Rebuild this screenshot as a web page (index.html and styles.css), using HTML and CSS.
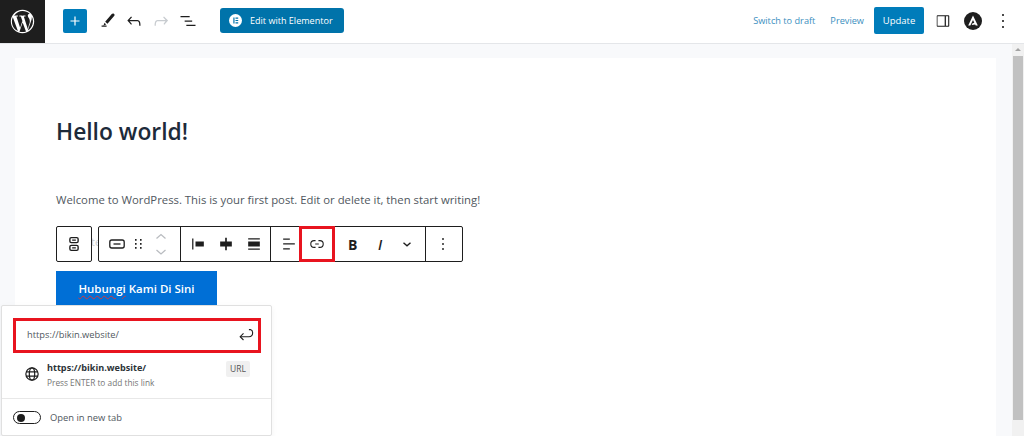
FILE: index.html
```html
<!DOCTYPE html>
<html lang="en">
<head>
    <meta charset="UTF-8">
    <meta name="viewport" content="width=device-width, initial-scale=1.0">
    <title>Edit Post</title>
    <link rel="stylesheet" href="styles.css">
</head>
<body>
    <header class="topbar">
        <a class="wp-logo">
            <svg width="27" height="27" viewBox="0 0 24 24" fill="#fff"><path d="M12 1.6C6.3 1.6 1.6 6.3 1.6 12S6.3 22.4 12 22.4 22.4 17.7 22.4 12 17.7 1.6 12 1.6zM2.6 12c0-1.4.3-2.6.8-3.8l4.5 12.3C4.700 19 2.600 15.700 2.600 12zM12 21.400c-.9 0-1.800-.1-2.700-.4l2.800-8.200 2.900 7.900c0 0 0 .1.100.1-.9.400-2 .6-3.100.6zM13.300 7.600c.6 0 1.100-.1 1.100-.1.500-.1.500-.8 0-.8 0 0-1.500.1-2.500.1-.9 0-2.400-.1-2.400-.1-.5 0-.6.800 0 .8 0 0 .5.100 1 .1l1.400 3.900-2 6-3.300-9.900c.6 0 1.100-.1 1.100-.1.500-.1.500-.8 0-.8 0 0-1.500.1-2.500.1h-.6C6.300 4.300 9 2.600 12 2.600c2.500 0 4.700.9 6.400 2.500h-.1c-.9 0-1.600.8-1.600 1.700 0 .8.500 1.500 1 2.300.4.700.8 1.500.8 2.800 0 .9-.3 1.900-.8 3.300l-1 3.500-3.400-10.600zM16.700 20.100l2.900-8.300c.5-1.300.7-2.400.7-3.300 0-.3 0-.6-.1-.9.700 1.300 1.100 2.800 1.100 4.400 0 3.500-1.900 6.500-4.600 8.100z"/></svg>
        </a>
        <div class="tools">
            <button class="add-btn">
                <svg width="18" height="18" viewBox="0 0 24 24" fill="#fff"><path d="M18 11.200h-5.200V6h-1.600v5.200H6v1.600h5.200V18h1.600v-5.200H18z"/></svg>
            </button>
            <svg class="tool" width="20" height="20" viewBox="0 0 24 24" fill="#1e1e1e"><path d="M19.500 4.500c-1-.8-2-.7-2.800.2l-7.900 9.300 2.800 2.300 7.900-9.300c.8-.9.900-1.700 0-2.500zM8 15.200l-1.200 3.200 3.200-1.300zM4.500 20h6v-1.500h-6z" transform="translate(1 -1)"/></svg>
            <svg class="tool" width="20" height="20" viewBox="0 0 24 24" fill="#1e1e1e"><path d="M18.300 11.700c-.6-.6-1.400-.9-2.300-.9H6.700l2.900-3.300-1.100-1-4.500 5L8.500 16.500l1-1-2.700-3.200H16c.5 0 .9.200 1.300.5 1 1 1 3.400 1 4.500v.3h1.500v-.2c0-1.500 0-4.300-1.500-5.700z"/></svg>
            <svg class="tool" width="20" height="20" viewBox="0 0 24 24" fill="#c8ccd0"><path d="M15.600 6.500l-1.100 1 2.900 3.300H8c-.9 0-1.700.3-2.300.9-1.400 1.500-1.400 4.200-1.400 5.700v.2h1.500v-.3c0-1.100 0-3.500 1-4.500.3-.3.700-.5 1.300-.5h9.200L15 15.500l1 1 4.500-5z"/></svg>
            <svg class="tool" width="20" height="20" viewBox="0 0 24 24" fill="#1e1e1e"><path d="M3 6h11v1.500H3zM8 11.300h9v1.500H8zM10 16.500h11V18H10z"/></svg>
            <button class="elementor-btn">
                <svg width="13" height="13" viewBox="0 0 24 24"><circle cx="12" cy="12" r="12" fill="#fff"/><path d="M8 6.500h2.200v11H8zM12 6.500h5v2.100h-5zM12 10.900h5V13h-5zM12 15.400h5v2.100h-5z" fill="#0073aa"/></svg>
                Edit with Elementor
            </button>
        </div>
        <div class="actions">
            <a class="link">Switch to draft</a>
            <a class="link preview">Preview</a>
            <button class="update-btn">Update</button>
            <svg class="sidebar-icon" width="20" height="20" viewBox="0 0 24 24" fill="#1e1e1e"><path d="M5.500 5h13c.6 0 1 .4 1 1v12c0 .6-.4 1-1 1h-13c-.6 0-1-.4-1-1V6c0-.6.400-1 1-1zm0 1.400c-.1 0-.1 0-.1.100v11c0 .1 0 .1.100.1H14V6.400zm10 0v11.200h2.600c.1 0 .1 0 .1-.1v-11c0-.1 0-.1-.1-.1z"/></svg>
            <span class="astra-icon">
                <svg width="18" height="18" viewBox="0 0 18 18" fill="#fff"><path d="M9 3.500L4.200 13.500h2.100L9 8l1.300 2.700-2 .9-.6 1.300 3.500-.4.500.9h2.100z"/></svg>
            </span>
            <svg class="tool" width="24" height="24" viewBox="0 0 24 24" fill="#1e1e1e"><path d="M12.800 19h-1.600v-2h1.600zm0-6h-1.600v-2h1.600zm0-6h-1.600V5h1.600z"/></svg>
        </div>
    </header>

    <div class="editor">
        <main class="canvas">
            <article class="post">
                <h1>Hello world!</h1>
                <p class="post-text">Welcome to WordPress. This is your first post. Edit or delete it, then start writing!</p>
                <div class="toolbar-space"></div>
                <a class="post-button"><span class="typo">Hubungi</span> Kami Di Sini</a>
            </article>
        </main>
        <div class="scrollbar">
            <span class="scroll-arrow"></span>
            <span class="scroll-thumb"></span>
        </div>
    </div>

    <span class="ghost-text">te</span>

    <div class="block-toolbar">
        <div class="tb-group tb-single">
            <svg width="22" height="24" viewBox="0 0 24 24" fill="none" stroke="#1e1e1e" stroke-width="1.500"><rect x="7.500" y="5" width="9" height="5.500" rx="1.500"/><rect x="7.500" y="13.500" width="9" height="5.500" rx="1.500"/><path d="M10 7.800h4M10 16.200h4"/></svg>
        </div>
        <div class="tb-group tb-main">
            <div class="tb-section first">
                <svg width="24" height="24" viewBox="0 0 24 24" fill="none" stroke="#1e1e1e" stroke-width="1.300"><rect x="4.800" y="8" width="14.400" height="8" rx="2"/><path d="M8.500 12h7"/></svg>
                <svg width="18" height="24" viewBox="0 0 18 24" fill="#1e1e1e"><path d="M5 7h1.600v1.800H5zM10 7h1.600v1.800H10zM5 11h1.600v1.800H5zM10 11h1.600v1.800H10zM5 15h1.600v1.800H5zM10 15h1.600v1.800H10z"/></svg>
                <svg width="24" height="30" viewBox="0 0 24 30" fill="none" stroke="#b9bcc0" stroke-width="1.300"><path d="M7.500 9.500L12 5.500l4.500 4M7.500 21L12 25l4.500-4"/></svg>
            </div>
            <div class="tb-section align">
                <svg width="20" height="24" viewBox="0 0 24 24" fill="#1e1e1e"><path d="M5 5.500h1.500v13H5zM9 9h10v6H9z"/></svg>
                <svg width="20" height="24" viewBox="0 0 24 24" fill="#1e1e1e"><path d="M11 4.500h2V9h6v6h-6v4.500h-2V15H5V9h6z"/></svg>
                <svg width="20" height="24" viewBox="0 0 24 24" fill="#1e1e1e"><path d="M5 5h14v1.500H5zM5 9h14v6H5zM5 17.500h14V19H5z"/></svg>
            </div>
            <div class="tb-section link-section">
                <svg width="20" height="24" viewBox="0 0 24 24" fill="#1e1e1e"><path d="M5 5.500h8V7H5zM5 11.200h14v1.500H5zM5 17h8v1.500H5z"/></svg>
                <span class="link-tool">
                    <svg width="24" height="24" viewBox="0 0 24 24" fill="#1e1e1e"><path d="M10 17.400H8A5.400 5.400 0 0 1 8 6.600h2V8.100H8a3.900 3.900 0 0 0 0 7.800h2zM16 6.600h-2v1.500h2a3.900 3.900 0 0 1 0 7.800h-2v1.500h2a5.400 5.400 0 0 0 0-10.800zM14.500 11.300h-5v1.400h5z" transform="translate(12 12) scale(.72) translate(-12 -12)"/></svg>
                </span>
            </div>
            <div class="tb-section format">
                <span class="fmt-bold">B</span>
                <span class="fmt-italic">I</span>
                <svg width="24" height="24" viewBox="0 0 24 24" fill="none" stroke="#1e1e1e" stroke-width="1.400"><path d="M8.500 10.800l3.500 3 3.500-3"/></svg>
            </div>
            <div class="tb-section more">
                <svg width="24" height="24" viewBox="0 0 24 24" fill="#1e1e1e"><path d="M11.300 6h1.400v2h-1.400zM11.300 11h1.400v2h-1.400zM11.300 16h1.400v2h-1.400z"/></svg>
            </div>
        </div>
    </div>

    <div class="link-popover">
        <div class="url-input">
            <span>https://bikin.website/</span>
            <svg width="20" height="20" viewBox="0 0 24 24" fill="none" stroke="#1e1e1e" stroke-width="1.300"><path d="M15.500 5.500h1.800c1.700.5 2.700 2 2.700 3.800 0 2.700-2 4.700-4.500 4.700H5"/><path d="M9 10l-4 4 4 4"/></svg>
        </div>
        <div class="suggestion">
            <svg width="18" height="18" viewBox="0 0 24 24" fill="none" stroke="#1e1e1e" stroke-width="1.600"><circle cx="12" cy="12" r="8.200"/><ellipse cx="12" cy="12" rx="3.600" ry="8.200"/><path d="M4 9.200h16M4 14.800h16"/></svg>
            <div class="suggestion-text">
                <strong>https://bikin.website/</strong>
                <small>Press ENTER to add this link</small>
            </div>
            <span class="url-tag">URL</span>
        </div>
        <div class="new-tab">
            <span class="toggle"><span class="toggle-knob"></span></span>
            <span>Open in new tab</span>
        </div>
    </div>
</body>
</html>
```

FILE: styles.css
```css
* {
    box-sizing: border-box;
}
html, body {
    height: 436px;
    overflow: hidden;
}
body {
    margin: 0;
    font-family: "Open Sans", "Noto Sans", sans-serif;
    color: #1e1e1e;
    background-color: #fff;
}
button {
    font-family: inherit;
    border: none;
    color: #fff;
}
.topbar {
    height: 44px;
    display: flex;
    align-items: center;
    background-color: #fff;
    border-bottom: 1px solid #e4e6e9;
}
.wp-logo {
    width: 45px;
    height: 43px;
    display: flex;
    align-items: center;
    justify-content: center;
    background-color: #1e1e1e;
}
.tools {
    display: flex;
    align-items: center;
    margin-left: 18px;
    padding-bottom: 2px;
}
.tool {
    display: block;
    flex: none;
}
.add-btn {
    width: 24px;
    height: 24px;
    padding: 0;
    display: flex;
    align-items: center;
    justify-content: center;
    background-color: #007cba;
    border-radius: 2px;
    margin-right: 10px;
}
.tools .tool {
    margin-right: 7px;
}
.elementor-btn {
    height: 25px;
    width: 124px;
    margin-left: 15px;
    padding: 0 0 0 9px;
    display: flex;
    align-items: center;
    gap: 8px;
    font-size: 9.050px;
    background-color: #0073aa;
    border-radius: 3px;
    white-space: nowrap;
}
.actions {
    margin-left: auto;
    display: flex;
    align-items: center;
    padding-right: 9px;
    padding-bottom: 2px;
}
.link {
    font-size: 9.200px;
    color: #3c8fc0;
}
.preview {
    margin-left: 15px;
}
.update-btn {
    width: 50px;
    height: 27px;
    margin-left: 10px;
    padding: 0;
    font-size: 9.500px;
    background-color: #007cba;
    border-radius: 2px;
}
.sidebar-icon {
    margin-left: 9px;
}
.astra-icon {
    width: 18px;
    height: 18px;
    margin-left: 11px;
    margin-right: 9px;
    border-radius: 50%;
    background-color: #1e1e1e;
    display: flex;
}
.editor {
    height: 392px;
    display: flex;
}
.canvas {
    flex: 1;
    padding: 14px 16px 0 15px;
    background-color: #f8f9fb;
}
.post {
    height: 100%;
    padding: 56px 0 0 41px;
    background-color: #fff;
}
.post h1 {
    margin: 0;
    font-size: 22.800px;
    line-height: 36px;
    font-weight: 600;
    color: #1d2a3a;
}
.post-text {
    margin: 41px 0 0;
    font-size: 11.330px;
    line-height: 18px;
    color: #50575e;
}
.toolbar-space {
    height: 62px;
}
.post-button {
    display: block;
    width: 161px;
    height: 50px;
    padding-top: 8px;
    text-align: center;
    font-size: 11.500px;
    line-height: 20px;
    font-weight: 600;
    color: #fff;
    background-color: #006fd6;
}
.typo {
    text-decoration-line: underline;
    text-decoration-style: wavy;
    text-decoration-color: #d63638;
    text-decoration-thickness: 1px;
    text-underline-offset: 2px;
}
.scrollbar {
    width: 12px;
    background-color: #f1f1f1;
    display: flex;
    flex-direction: column;
    align-items: center;
}
.scroll-arrow {
    margin-top: 4px;
    border-left: 3px solid transparent;
    border-right: 3px solid transparent;
    border-bottom: 3px solid #a3a3a3;
}
.scroll-thumb {
    margin-top: 5px;
    width: 10px;
    height: 364px;
    background-color: #c1c1c1;
}
.ghost-text {
    position: absolute;
    left: 91px;
    top: 234px;
    font-size: 11px;
    color: #c9ccd0;
}
.block-toolbar {
    position: absolute;
    left: 56px;
    top: 226px;
    display: flex;
    gap: 6px;
}
.tb-group {
    height: 36px;
    display: flex;
    align-items: center;
    background-color: #fff;
    border: 1px solid #1e1e1e;
    border-radius: 2px;
}
.tb-single {
    width: 36px;
    justify-content: center;
}
.tb-main {
    width: 365px;
}
.tb-section {
    height: 100%;
    display: flex;
    align-items: center;
    border-right: 1px solid #1e1e1e;
}
.first {
    width: 82px;
    padding-left: 6px;
    gap: 1px;
}
.align {
    width: 90px;
    padding-left: 7px;
    gap: 8px;
}
.link-section {
    width: 64px;
    padding-left: 8px;
}
.link-tool {
    width: 36px;
    height: 36px;
    margin: -1px -1px -1px 0;
    flex: none;
    display: flex;
    align-items: center;
    justify-content: center;
    border: 3px solid #e8141f;
    background-color: #fff;
    position: relative;
}
.format {
    width: 91px;
    padding-left: 13px;
}
.fmt-bold {
    width: 21px;
    font-size: 14px;
    font-weight: 700;
}
.fmt-italic {
    width: 21px;
    margin-left: 9px;
    font-size: 14px;
    font-weight: 600;
    font-style: italic;
}
.fmt-italic + svg {
    margin-left: -4px;
}
.more {
    border-right: none;
    padding-left: 5px;
}
.link-popover {
    position: absolute;
    left: 1px;
    top: 305px;
    width: 271px;
    height: 131px;
    background-color: #fff;
    border: 1px solid #e0e0e0;
    border-radius: 2px;
    box-shadow: 0 2px 6px rgba(0,0,0,0.05);
}
.url-input {
    width: 248px;
    height: 35px;
    margin: 12px 0 0 11px;
    padding: 0 2px 2px 11px;
    display: flex;
    align-items: center;
    justify-content: space-between;
    font-size: 9.300px;
    color: #50575e;
    border: 3px solid #e8141f;
}
.suggestion {
    height: 46px;
    padding: 8px 21px 0 21px;
    display: flex;
    align-items: flex-start;
    border-bottom: 1px solid #e8e8e8;
}
.suggestion > svg {
    margin-top: 4px;
    flex: none;
}
.suggestion-text {
    margin-left: 6px;
    flex: 1;
    display: flex;
    flex-direction: column;
}
.suggestion-text strong {
    font-size: 9.100px;
    line-height: 13px;
    font-weight: 700;
    color: #2c3338;
}
.suggestion-text small {
    margin-top: 2px;
    font-size: 8.300px;
    line-height: 13px;
    color: #757575;
}
.url-tag {
    width: 24px;
    height: 16px;
    font-size: 8.500px;
    line-height: 16px;
    text-align: center;
    color: #555;
    background-color: #f0f0f0;
    border-radius: 2px;
}
.new-tab {
    padding: 12px 0 0 11px;
    display: flex;
    align-items: center;
    gap: 9px;
    font-size: 9.400px;
    color: #50575e;
}
.toggle {
    width: 28px;
    height: 13px;
    display: flex;
    align-items: center;
    padding-left: 3px;
    border: 1px solid #1e1e1e;
    border-radius: 7px;
}
.toggle-knob {
    width: 8px;
    height: 8px;
    border-radius: 50%;
    background-color: #1e1e1e;
}
```
